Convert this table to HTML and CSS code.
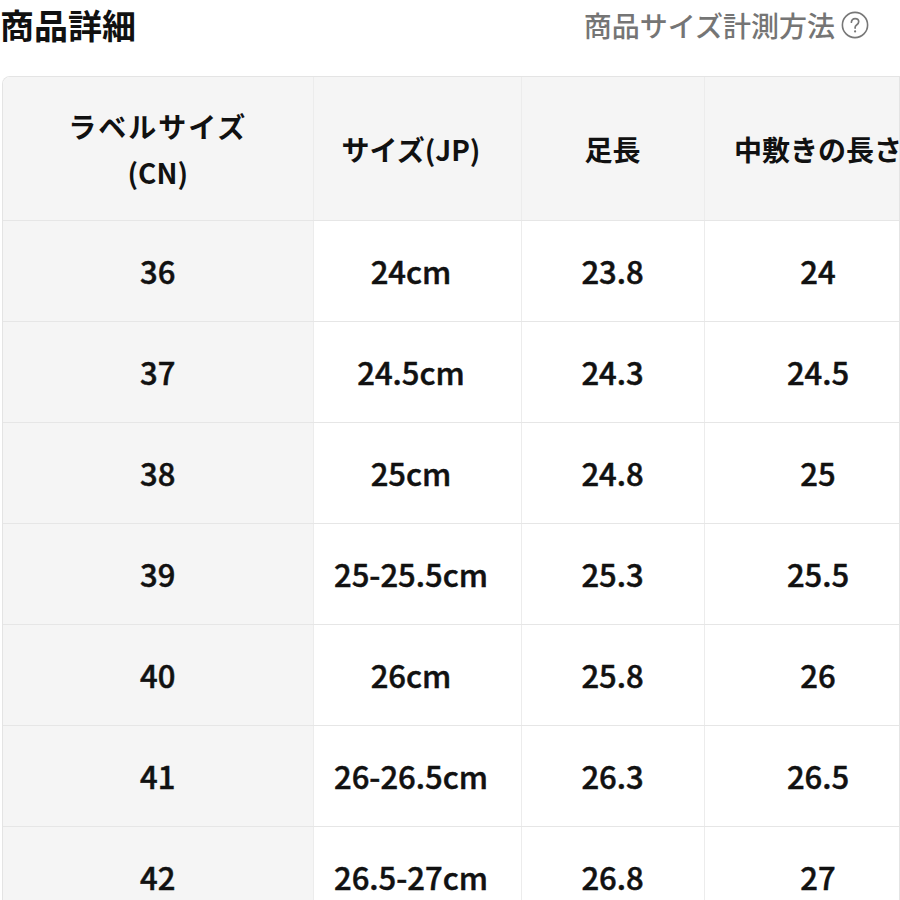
FILE: index.html
```html
<!DOCTYPE html>
<html lang="ja">
<head>
<meta charset="utf-8">
<link rel="stylesheet" href="styles.css">
</head>
<body>
<div class="page">
  <header class="head">
    <h1 class="title">商品詳細</h1>
    <a class="howto">商品サイズ計測方法<svg class="help" viewBox="0 0 28 28" width="28" height="28"><circle cx="14" cy="14" r="12.6" fill="none" stroke="#777" stroke-width="1.6"/><path d="M10.4 11.2c0-2.2 1.6-3.6 3.7-3.6s3.6 1.3 3.6 3.2c0 1.6-.9 2.4-2.1 3.2-1 .7-1.5 1.2-1.5 2.5v.6" fill="none" stroke="#777" stroke-width="1.7" stroke-linecap="round"/><circle cx="14.1" cy="20.4" r="1.1" fill="#777"/></svg></a>
  </header>
  <div class="table-wrap">
    <table class="size-table">
      <colgroup>
        <col class="c1"><col class="c2"><col class="c3"><col class="c4">
      </colgroup>
      <thead>
        <tr>
          <th><span class="wide">ラベルサイズ</span><br>(CN)</th>
          <th class="jp">サイズ(JP)</th>
          <th>足長</th>
          <th>中敷きの長さ</th>
        </tr>
      </thead>
      <tbody>
        <tr><td class="lbl">36</td><td class="jp">24cm</td><td>23.8</td><td>24</td></tr>
        <tr><td class="lbl">37</td><td class="jp">24.5cm</td><td>24.3</td><td>24.5</td></tr>
        <tr><td class="lbl">38</td><td class="jp">25cm</td><td>24.8</td><td>25</td></tr>
        <tr><td class="lbl">39</td><td class="jp">25-25.5cm</td><td>25.3</td><td>25.5</td></tr>
        <tr><td class="lbl">40</td><td class="jp">26cm</td><td>25.8</td><td>26</td></tr>
        <tr><td class="lbl">41</td><td class="jp">26-26.5cm</td><td>26.3</td><td>26.5</td></tr>
        <tr><td class="lbl">42</td><td class="jp">26.5-27cm</td><td>26.8</td><td>27</td></tr>
      </tbody>
    </table>
  </div>
</div>
</body>
</html>
```

FILE: styles.css
```css
html, body {
  margin: 0;
  padding: 0;
  background: #fff;
}
body {
  width: 900px;
  height: 900px;
  overflow: hidden;
  font-family: "Noto Sans CJK JP", sans-serif;
  color: #111;
}
.page {
  display: flex;
  flex-direction: column;
}
.head {
  display: flex;
  justify-content: space-between;
  align-items: center;
  height: 50px;
  padding-right: 31px;
}
.title {
  margin: 0;
  font-family: "Noto Sans CJK JP", sans-serif;
  font-size: 34px;
  font-weight: 700;
  line-height: 50px;
  color: #111;
}
.howto {
  display: flex;
  align-items: center;
  gap: 6px;
  font-family: "Noto Sans CJK JP", sans-serif;
  font-size: 28px;
  font-weight: 500;
  color: #757575;
}
.help {
  display: block;
}
.table-wrap {
  margin-top: 26px;
  margin-left: 2px;
  width: 896px;
  overflow: hidden;
  border-top: 1.5px solid #e4e4e4;
  border-left: 1.5px solid #e4e4e4;
  border-right: 1.5px solid #e4e4e4;
  border-top-left-radius: 8px;
}
.size-table {
  table-layout: fixed;
  border-collapse: collapse;
  width: 929px;
}
.c1 { width: 310px; }
.c2 { width: 208px; }
.c3 { width: 183px; }
.c4 { width: 228px; }
.size-table th,
.size-table td {
  text-align: center;
  vertical-align: middle;
  padding: 0;
  border-right: 1px solid #ececec;
  border-bottom: 1px solid #e6e6e6;
  font-family: "Noto Sans CJK JP", sans-serif;
  font-weight: 700;
  color: #111;
  white-space: nowrap;
}
.size-table th {
  height: 143px;
  background: #f5f5f5;
  font-size: 28px;
  line-height: 46px;
}
.size-table th .wide {
  letter-spacing: 2px;
}
.size-table td {
  height: 100px;
  background: #fff;
  font-size: 31px;
  font-weight: 500;
  line-height: 40px;
  -webkit-text-stroke: 0.5px #111;
}
.size-table td.lbl {
  background: #f5f5f5;
}
.size-table .jp {
  padding-right: 12px;
}
```
